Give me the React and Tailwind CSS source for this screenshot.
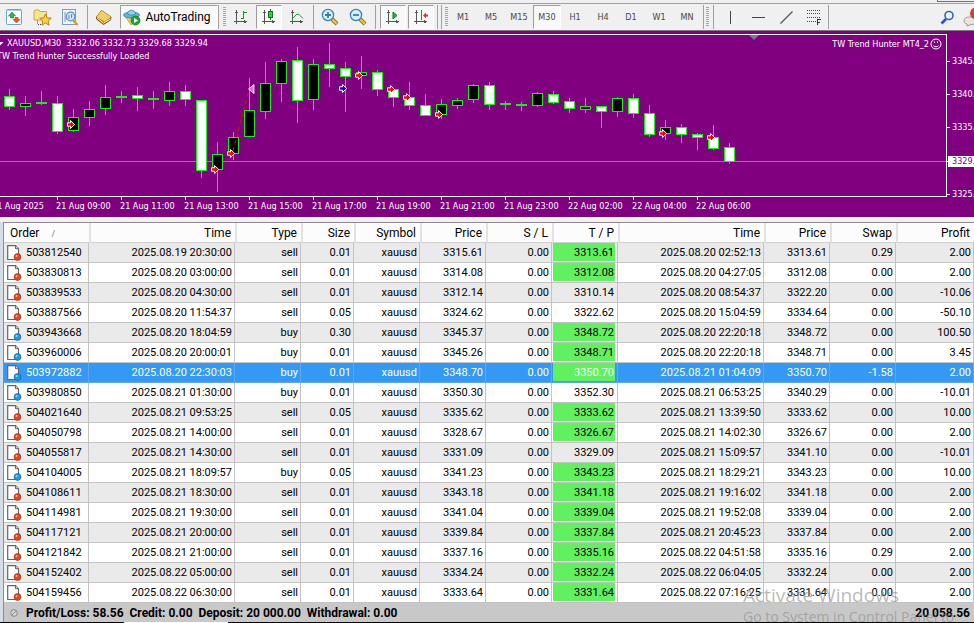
import React from "react";

/* ---------- data ---------- */

// centre x, high, body top, body bottom, low, kind (u = black body, d = white body, f = flat)
const CANDLES = [
  [9, 89, 96, 107, 110, "d"], [25, 96, 103, 107, 116, "u"], [41, 91, 102, 104, 105, "f"],
  [57, 96, 103, 132, 134, "d"], [73, 109, 117, 131, 132, "u"], [89, 101, 109, 118, 126, "u"],
  [105, 85, 97, 109, 115, "u"], [121, 91, 96, 98, 103, "f"], [137, 87, 95, 99, 111, "d"],
  [153, 91, 98, 100, 109, "f"], [169, 82, 91, 101, 106, "u"], [185, 85, 91, 100, 106, "d"],
  [201, 100, 100, 171, 178, "d"], [217, 142, 154, 170, 192, "u"], [233, 132, 137, 154, 160, "u"],
  [249, 78, 110, 137, 137, "u"], [265, 62, 83, 112, 119, "u"], [281, 59, 61, 84, 102, "u"],
  [297, 47, 60, 101, 123, "d"], [313, 59, 64, 100, 110, "u"], [329, 43, 64, 69, 87, "d"],
  [345, 62, 68, 77, 112, "d"], [361, 56, 72, 76, 89, "u"], [377, 70, 72, 90, 96, "d"],
  [393, 89, 89, 98, 107, "d"], [409, 82, 97, 106, 110, "d"], [425, 94, 105, 116, 116, "d"],
  [441, 99, 104, 115, 119, "u"], [457, 98, 100, 106, 109, "u"], [473, 84, 85, 100, 103, "u"],
  [489, 82, 85, 105, 110, "d"], [505, 101, 103, 105, 110, "f"], [521, 102, 104, 106, 111, "f"],
  [537, 92, 93, 106, 107, "u"], [553, 91, 94, 103, 104, "d"], [569, 98, 101, 109, 113, "d"],
  [585, 98, 106, 110, 113, "u"], [601, 106, 106, 112, 128, "d"], [617, 97, 98, 112, 117, "u"],
  [633, 94, 98, 114, 118, "d"], [649, 105, 113, 135, 137, "d"], [665, 120, 127, 134, 140, "u"],
  [681, 124, 127, 135, 143, "d"], [697, 133, 134, 138, 150, "d"], [713, 125, 137, 149, 150, "d"],
  [729, 143, 147, 162, 164, "d"],
];

const ARROWS = [
  [71, 124.5, "#ff0000"], [215, 169.5, "#ff0000"], [231, 153.5, "#ff0000"],
  [343, 88.5, "#0000ff"], [359, 75.5, "#ff0000"], [391, 89.5, "#ff0000"],
  [407, 97.5, "#ff0000"], [439, 114.5, "#ff0000"], [663, 133.5, "#ff0000"],
  [711, 137.5, "#ff0000"],
];

const TIMES = [
  "21 Aug 2025", "21 Aug 09:00", "21 Aug 11:00", "21 Aug 13:00", "21 Aug 15:00", "21 Aug 17:00",
  "21 Aug 19:00", "21 Aug 21:00", "21 Aug 23:00", "22 Aug 02:00", "22 Aug 04:00", "22 Aug 06:00",
];

const TIMEFRAMES = ["M1", "M5", "M15", "M30", "H1", "H4", "D1", "W1", "MN"];

const COLUMNS = [
  ["Order", "w-[85px]"], ["Time", "w-[146px]"], ["Type", "w-[66px]"], ["Size", "w-[53px]"],
  ["Symbol", "w-[66px]"], ["Price", "w-[66px]"], ["S / L", "w-[66px]"], ["T / P", "w-[66px]"],
  ["Time", "w-[146px]"], ["Price", "w-[66px]"], ["Swap", "w-[66px]"], ["Profit", "w-[78px]"],
];

// order, open time, type, size, price, T/P, T/P hit, close time, close price, swap, profit
const ORDERS = [
  ["503812540", "2025.08.19 20:30:00", "sell", "0.01", "3315.61", "3313.61", 1, "2025.08.20 02:52:13", "3313.61", "0.29", "2.00"],
  ["503830813", "2025.08.20 03:00:00", "sell", "0.01", "3314.08", "3312.08", 1, "2025.08.20 04:27:05", "3312.08", "0.00", "2.00"],
  ["503839533", "2025.08.20 04:30:00", "sell", "0.01", "3312.14", "3310.14", 0, "2025.08.20 08:54:37", "3322.20", "0.00", "-10.06"],
  ["503887566", "2025.08.20 11:54:37", "sell", "0.05", "3324.62", "3322.62", 0, "2025.08.20 15:04:59", "3334.64", "0.00", "-50.10"],
  ["503943668", "2025.08.20 18:04:59", "buy", "0.30", "3345.37", "3348.72", 1, "2025.08.20 22:20:18", "3348.72", "0.00", "100.50"],
  ["503960006", "2025.08.20 20:00:01", "buy", "0.01", "3345.26", "3348.71", 1, "2025.08.20 22:20:18", "3348.71", "0.00", "3.45"],
  ["503972882", "2025.08.20 22:30:03", "buy", "0.01", "3348.70", "3350.70", 1, "2025.08.21 01:04:09", "3350.70", "-1.58", "2.00"],
  ["503980850", "2025.08.21 01:30:00", "buy", "0.01", "3350.30", "3352.30", 0, "2025.08.21 06:53:25", "3340.29", "0.00", "-10.01"],
  ["504021640", "2025.08.21 09:53:25", "sell", "0.05", "3335.62", "3333.62", 1, "2025.08.21 13:39:50", "3333.62", "0.00", "10.00"],
  ["504050798", "2025.08.21 14:00:00", "sell", "0.01", "3328.67", "3326.67", 1, "2025.08.21 14:02:30", "3326.67", "0.00", "2.00"],
  ["504055817", "2025.08.21 14:30:00", "sell", "0.01", "3331.09", "3329.09", 0, "2025.08.21 15:09:57", "3341.10", "0.00", "-10.01"],
  ["504104005", "2025.08.21 18:09:57", "buy", "0.05", "3341.23", "3343.23", 1, "2025.08.21 18:29:21", "3343.23", "0.00", "10.00"],
  ["504108611", "2025.08.21 18:30:00", "sell", "0.01", "3343.18", "3341.18", 1, "2025.08.21 19:16:02", "3341.18", "0.00", "2.00"],
  ["504114981", "2025.08.21 19:30:00", "sell", "0.01", "3341.04", "3339.04", 1, "2025.08.21 19:52:08", "3339.04", "0.00", "2.00"],
  ["504117121", "2025.08.21 20:00:00", "sell", "0.01", "3339.84", "3337.84", 1, "2025.08.21 20:45:23", "3337.84", "0.00", "2.00"],
  ["504121842", "2025.08.21 21:00:00", "sell", "0.01", "3337.16", "3335.16", 1, "2025.08.22 04:51:58", "3335.16", "0.29", "2.00"],
  ["504152402", "2025.08.22 05:00:00", "sell", "0.01", "3334.24", "3332.24", 1, "2025.08.22 06:04:05", "3332.24", "0.00", "2.00"],
  ["504159456", "2025.08.22 06:30:00", "sell", "0.01", "3333.64", "3331.64", 1, "2025.08.22 07:16:25", "3331.64", "0.00", "2.00"],
];

const SELECTED = "503972882";

/* ---------- toolbar ---------- */

function ToolButton({ label, className = "w-7", pressed = false, children }) {
  return (
    <button
      type="button"
      aria-label={label}
      aria-pressed={pressed}
      className={`flex h-6 shrink-0 items-center justify-center ${className} ${
        pressed ? "border border-t-[#9c9c9c] border-l-[#9c9c9c] border-r-white border-b-white bg-[#f8f8f8]" : ""
      }`}
    >
      {children}
    </button>
  );
}

function Separator({ className = "" }) {
  return <span className={`h-6 w-px shrink-0 bg-[#a0a0a0] ${className}`} />;
}

function Handle({ className = "" }) {
  return (
    <span
      className={`h-5 w-[3px] shrink-0 bg-[repeating-linear-gradient(to_bottom,#a6a6a6_0_1px,#f0f0f0_1px_2px)] ${className}`}
    />
  );
}

const Axes = ({ children }) => (
  <svg width="16" height="16" viewBox="0 0 16 16" fill="none" shapeRendering="crispEdges">
    <path d="M3.5 1v14M1 12.5h13M2 3.5h3M11.5 11v3M12.5 11.5v2" stroke="#555" />
    {children}
  </svg>
);

function Magnifier({ plus }) {
  return (
    <svg width="18" height="18" viewBox="0 0 18 18" fill="none">
      <path d="M11 11l5 5" stroke="#8a6a10" strokeWidth="4" />
      <path d="M11 11l4.6 4.6" stroke="#f3c944" strokeWidth="2.4" />
      <circle cx="7" cy="7" r="5.6" fill="#d3efff" stroke="#3d7fb5" strokeWidth="1.3" />
      <path d={plus ? "M4 7h6M7 4v6" : "M4 7h6"} stroke="#3a7ca6" strokeWidth="1.8" />
    </svg>
  );
}

function Toolbar() {
  return (
    <div role="toolbar" className="flex h-[27px] items-center overflow-hidden border-b border-[#7a7a7a] bg-[#f0f0f0]">
      <ToolButton label="Market watch">
        <svg width="16" height="16" viewBox="0 0 16 16">
          <rect x=".5" y=".5" width="15" height="15" rx="1" fill="#fff" stroke="#6ea2d0" />
          <path d="M1 1h14v1H1z" fill="#a9cdec" />
          <path d="M6 3l3.500 4h-2v2h-3V7h-2z" fill="#38b34a" stroke="#167a2a" strokeWidth=".6" />
          <path d="M10.500 14L7 10.500h2v-2h3v2h2z" fill="#ee5a30" stroke="#b43512" strokeWidth=".6" />
        </svg>
      </ToolButton>
      <ToolButton label="Navigator">
        <svg width="19" height="17" viewBox="0 0 19 17">
          <path d="M1 2.500l1-1.500h4l1 1.500h6.500V11H1z" fill="#fbe48e" stroke="#c99b34" strokeWidth=".9" />
          <path d="M4.500 11.500v4M5 15.500h4" stroke="#444" strokeDasharray="1 1" />
          <path d="M12.500 5l1.700 3.800 4.100.4-3.100 2.800.9 4.200-3.600-2.200-3.600 2.200.9-4.200-3.100-2.800 4.100-.4z" fill="#f9cf45" stroke="#a87a12" strokeWidth=".9" />
        </svg>
      </ToolButton>
      <ToolButton label="Strategy tester">
        <svg width="18" height="17" viewBox="0 0 18 17" fill="none">
          <rect x="1.500" y=".5" width="13" height="15" fill="#eef4fa" stroke="#7f9dbb" />
          <path d="M4 3v10M6 5v6M12 3v4" stroke="#8a9bb0" />
          <path d="M12 11l4.500 5" stroke="#caa030" strokeWidth="2.400" />
          <circle cx="9.500" cy="7.500" r="4.300" fill="#c4e4fa" fillOpacity=".8" stroke="#5c92c4" strokeWidth="1.200" />
          <path d="M8 6v4M10.500 5v4" stroke="#6a8cae" />
        </svg>
      </ToolButton>
      <Separator className="ml-[3px]" />
      <ToolButton label="Data window" className="w-8">
        <svg width="18" height="17" viewBox="0 0 18 17">
          <path d="M6.500 1.500L16 8l-.5 3-7 4.500L1.500 10V8z" fill="#b37d18" stroke="#7b540c" />
          <path d="M6.500 1.500L16 8l-6.500 4.500L1.500 8z" fill="#f3cf62" />
          <path d="M2 9l6.500 5 7-4" stroke="#fbeab0" fill="none" />
        </svg>
      </ToolButton>
      <ToolButton label="AutoTrading" className="w-[98px] gap-1 pr-1" pressed>
        <svg width="18" height="17" viewBox="0 0 18 17" className="shrink-0">
          <path d="M2 7l6 9 8-7z" fill="#f4cf56" stroke="#b8902a" strokeWidth=".7" />
          <ellipse cx="8.500" cy="6" rx="8" ry="3" fill="#63b4e0" stroke="#2c7fb0" strokeWidth=".8" />
          <path d="M4.500 5C5 0 12 0 12.500 5c-2 1.500-6 1.500-8 0z" fill="#8fd0f0" stroke="#2c7fb0" strokeWidth=".8" />
          <circle cx="12.500" cy="11.500" r="4.500" fill="#1fa62c" stroke="#0b7a18" strokeWidth=".7" />
          <path d="M11 9l4 2.500-4 2.500z" fill="#fff" />
        </svg>
        <span className="text-[12px] leading-4 text-black">AutoTrading</span>
      </ToolButton>
      <Separator />
      <Handle className="ml-1" />
      <ToolButton label="Bar chart" className="ml-0.5 w-[26px]">
        <Axes><path d="M10.500 2v8M10.500 3.500h3M8 9.500h3" stroke="#129a1c" strokeWidth="1" /></Axes>
      </ToolButton>
      <ToolButton label="Candlesticks" className="ml-0.5 w-[26px]" pressed>
        <Axes>
          <path d="M9.500 0v11" stroke="#0a7a12" />
          <rect x="7.500" y="2.500" width="4" height="6" fill="#2fd03a" stroke="#0a7a12" />
        </Axes>
      </ToolButton>
      <ToolButton label="Line chart" className="ml-0.5 w-[26px]">
        <Axes><path d="M3 10l5-5 2 .5 4 4" stroke="#1c9a26" shapeRendering="auto" /></Axes>
      </ToolButton>
      <Separator className="ml-[3px]" />
      <ToolButton label="Zoom in" className="ml-0.5 w-7"><Magnifier plus /></ToolButton>
      <ToolButton label="Zoom out"><Magnifier /></ToolButton>
      <Separator className="ml-[3px]" />
      <ToolButton label="Auto scroll" className="ml-1 w-[26px]" pressed>
        <Axes><path d="M8 3l4 3.500L8 10z" fill="#2cb838" stroke="#0b7a18" shapeRendering="auto" /></Axes>
      </ToolButton>
      <ToolButton label="Chart shift" className="ml-0.5 w-[26px]" pressed>
        <Axes>
          <path d="M8.500 1v10" stroke="#2b6fae" />
          <path d="M10 6.500l3-3v2h2v2h-2v2z" fill="#c8401c" shapeRendering="auto" />
        </Axes>
      </ToolButton>
      <Separator className="ml-[3px]" />
      <Separator className="ml-[3px]" />
      <Handle className="ml-[3px] mr-px" />
      {TIMEFRAMES.map((t) => (
        <ToolButton key={t} label={t} pressed={t === "M30"}>
          <span className="font-['DejaVu_Sans_Condensed','DejaVu_Sans',sans-serif] text-[9px] leading-3 text-[#484848]">{t}</span>
        </ToolButton>
      ))}
      <Separator className="ml-0.5" />
      <Handle className="ml-0.5" />
      <Separator className="ml-1 mr-0.5" />
      <ToolButton label="Vertical line">
        <svg width="13" height="13"><path d="M6.500 0v13" stroke="#444" /></svg>
      </ToolButton>
      <ToolButton label="Horizontal line">
        <svg width="13" height="13"><path d="M0 6.500h13" stroke="#444" /></svg>
      </ToolButton>
      <ToolButton label="Trendline">
        <svg width="13" height="13"><path d="M.5 12.500l12-12" stroke="#555" strokeWidth="1.300" /></svg>
      </ToolButton>
      <ToolButton label="Fibonacci retracement">
        <svg width="16" height="18" shapeRendering="crispEdges">
          <path d="M1 2.500h14M1 5.500h14M1 9.500h14M1 13.500h9" stroke="#444" strokeDasharray="1 1" />
          <path d="M11.500 17v-5.500H15M11 14.500h3" stroke="#333" fill="none" />
        </svg>
      </ToolButton>
      <Separator />
      <ToolButton label="Search" className="ml-auto w-7">
        <svg width="15" height="15" viewBox="0 0 15 15" fill="none">
          <path d="M6 9l-4.500 4.500" stroke="#2a55c4" strokeWidth="2.600" />
          <circle cx="9" cy="5.500" r="4" fill="#eef5ff" stroke="#2f63d0" strokeWidth="1.600" />
        </svg>
      </ToolButton>
      <button type="button" aria-label="Messages" className="h-6 w-[13px] shrink-0 overflow-hidden pl-0.5">
        <svg width="18" height="20" viewBox="0 0 18 20" className="max-w-none">
          <path d="M1 14c0-3 3-4 6-4s7 1 7 4-4 3.500-6 3.500L4 19v-2c-2-.5-3-1.500-3-3z" fill="#e6e6e6" stroke="#9a9a9a" />
          <circle cx="13" cy="6.500" r="6" fill="#e63a22" />
        </svg>
      </button>
    </div>
  );
}

/* ---------- chart ---------- */

function Candle({ c: [x, hi, top, bot, lo, kind] }) {
  return (
    <g>
      <rect x={x} y={hi} width="1" height={lo - hi} fill="#00ff00" />
      <rect x={x - 5} y={top} width="11" height={bot - top} fill="#00ff00" />
      {kind !== "f" && (
        <rect x={x - 4} y={top + 1} width="9" height={bot - top - 2} fill={kind === "u" ? "#000" : "#fff"} />
      )}
    </g>
  );
}

function PriceAxis() {
  return (
    <div className="flex h-[163px] w-[27px] shrink-0 flex-col overflow-hidden pt-[22px]">
      {["3345.80", "3340.80", "3335.80", "3329.94", "3325.80"].map((p) => {
        const current = p === "3329.94";
        return (
          <div key={p} className={`flex shrink-0 items-center ${current ? "h-[34px]" : "h-[33px]"}`}>
            <div className="-mt-[22px] flex items-center">
              <span className={`h-px bg-white ${current ? "w-px" : "w-[3px]"}`} />
              <span className={current ? "bg-white py-px pr-2 pl-1 text-[#800080]" : "pl-0.5"}>{p}</span>
            </div>
          </div>
        );
      })}
    </div>
  );
}

function Chart() {
  return (
    <section className="overflow-hidden bg-[#800080] pt-[3px] font-['DejaVu_Sans_Condensed','DejaVu_Sans',sans-serif] text-[9px] leading-[9px] text-white">
      <div className="flex">
        <div className="relative h-[163px] min-w-0 flex-1 border-y border-r border-white">
          <svg width="100%" height="161" className="block" role="img" aria-label="XAUUSD M30 candlestick chart">
            <g transform="translate(0,-35)">
              <g shapeRendering="crispEdges">
                <rect x="0" y="161" width="100%" height="1" fill="#80808f" />
                {CANDLES.map((c) => <Candle key={c[0]} c={c} />)}
              </g>
              <path d="M233 151L249 90" stroke="#ff0000" strokeDasharray="4 3" />
              {ARROWS.map(([x, y, fill]) => (
                <path
                  key={x}
                  transform={`translate(${x},${y})`}
                  d="M-3.500-1.700h3v-2.300L3.700 0l-4.200 4V1.700h-3z"
                  fill={fill}
                  stroke="#fff"
                />
              ))}
              <path d="M254 84.500v9l-5.500-4.500z" fill="#da70d6" stroke="#fff" strokeWidth=".8" />
              <path d="M749 35h10l-5 5z" fill="#708090" />
            </g>
          </svg>
          <div className="absolute top-1 left-0 flex items-center gap-[3px]">
            <svg width="4" height="9"><path d="M0 3h3.500L0 6.500z" fill="#fff" /></svg>
            <span className="whitespace-pre">{"XAUUSD,M30  3332.06 3332.73 3329.68 3329.94"}</span>
          </div>
          <p className="absolute top-[17px] -left-[3px] whitespace-nowrap">TW Trend Hunter Successfully Loaded</p>
          <div className="absolute top-[3px] right-1 flex items-center gap-px">
            <span>TW Trend Hunter MT4_2</span>
            <svg width="12" height="12" viewBox="0 0 12 12" fill="none" stroke="#fff">
              <circle cx="6" cy="6" r="5" />
              <path d="M3.500 7.500c1 1.700 4 1.700 5 0M4.500 3.500v1.500M7.500 3.500v1.500" />
            </svg>
          </div>
        </div>
        <PriceAxis />
      </div>
      <div className="-ml-2 flex h-5 overflow-hidden">
        {TIMES.map((t) => (
          <span key={t} className="block w-16 shrink-0 whitespace-nowrap before:mb-[2px] before:ml-[9px] before:block before:h-[3px] before:w-px before:bg-white">
            <span className="ml-2">{t}</span>
          </span>
        )).map((el, i) => (i === 0 ? <span key="first" className="block w-14 shrink-0 pt-[5px] whitespace-nowrap">{TIMES[0]}</span> : el))}
      </div>
    </section>
  );
}

/* ---------- history table ---------- */

function OrderIcon({ buy }) {
  return (
    <svg width="15" height="16" viewBox="0 0 15 16" className="shrink-0">
      <path d="M.7.700h7.800l3 3v10.800H.7z" fill="#fff" stroke="#666" strokeWidth="1.200" />
      <path d="M8.500.700v3h3" fill="#ddd" stroke="#666" />
      <circle cx="10.500" cy="12" r="3.400" fill={buy ? "#1d9be8" : "#e8481c"} stroke={buy ? "#0e5f9c" : "#9c2a0a"} strokeWidth=".7" />
      <circle cx="9.500" cy="10.900" r="1" fill="#fff" fillOpacity=".6" />
    </svg>
  );
}

function Row({ order, shaded }) {
  const [id, opened, type, size, price, tp, hit, closed, closePrice, swap, profit] = order;
  const selected = id === SELECTED;
  const line = `border-r border-b text-right ${selected ? "border-[#5aa9f5]" : "border-[#c3c3c3]"}`;
  const cell = `${line} pt-px pr-0.5`;
  return (
    <tr
      aria-selected={selected}
      className={`h-5 ${selected ? "bg-[#3399f5] text-white" : shaded ? "bg-[#eaeaea]" : "bg-white"}`}
    >
      <td className={cell}>
        <span className="flex items-center gap-1 pl-[3px]"><OrderIcon buy={type === "buy"} />{id}</span>
      </td>
      <td className={cell}>{opened}</td>
      <td className={cell}>{type}</td>
      <td className={cell}>{size}</td>
      <td className={cell}>xauusd</td>
      <td className={cell}>{price}</td>
      <td className={cell}>0.00</td>
      <td className={`${line} pr-0.5 pb-px pl-px`}>
        <span className={`block h-[18px] pr-px leading-[20px] ${hit ? "bg-[#60f060]" : ""}`}>{tp}</span>
      </td>
      <td className={cell}>{closed}</td>
      <td className={cell}>{closePrice}</td>
      <td className={cell}>{swap}</td>
      <td className={cell}>{profit}</td>
    </tr>
  );
}

function History() {
  return (
    <section className="border-t border-l border-[#8c8c8c]">
      <table className="w-full table-fixed border-separate border-spacing-0 text-[11px] leading-[16px] text-black">
        <thead>
          <tr className="h-5 bg-[#fcfcfc] text-[12px]">
            {COLUMNS.map(([name, width], i) => (
              <th
                key={i}
                scope="col"
                className={`border-b border-[#d0d0d0] pt-px font-normal ${width} ${
                  i === 0 ? "pl-1.5 text-left" : "border-l-2 border-l-[#e2e2e2] pr-1 text-right"
                }`}
              >
                {name}
                {i === 0 && <span className="ml-3 text-[9px] text-[#777]">/</span>}
              </th>
            ))}
          </tr>
        </thead>
        <tbody>
          {ORDERS.map((o, i) => <Row key={o[0]} order={o} shaded={i % 2 === 0} />)}
        </tbody>
      </table>
      <div className="flex h-[19px] items-center bg-[#c8c8c8] pr-1 pl-1.5 text-[12px] leading-4 font-bold text-black">
        <svg width="8" height="8" viewBox="0 0 8 8" className="mr-2">
          <circle cx="4" cy="4" r="3.300" fill="#d8d8d8" stroke="#888" />
          <path d="M2 6l4-4" stroke="#888" />
        </svg>
        <span className="whitespace-pre">{"Profit/Loss: 58.56  Credit: 0.00  Deposit: 20 000.00  Withdrawal: 0.00"}</span>
        <span className="ml-auto">20 058.56</span>
      </div>
    </section>
  );
}

export default function App() {
  return (
    <div className="relative overflow-hidden bg-[#f0f0f0] font-[Roboto,'Open_Sans',sans-serif]">
      <div className="flex h-1 justify-end border-b border-[#a0a0a0]">
        <span className="h-0.5 w-[37px] border-b border-l border-[#707070]" />
      </div>
      <Toolbar />
      <Chart />
      <div className="h-[5px] border-t border-white" />
      <div className="bg-[#d5dde6] pl-[3px]">
        <History />
      </div>
      <div className="flex h-px bg-black"><span className="ml-[124px] w-[104px] bg-white" /></div>
      <div className="pointer-events-none absolute right-0 bottom-0 h-10 w-[231px] overflow-hidden whitespace-nowrap text-[#8a8a8a]/60 font-['Open_Sans',sans-serif]">
        <p className="text-[19px] leading-6">Activate Windows</p>
        <p className="text-[14px] leading-5">Go to System in Control Panel to</p>
      </div>
    </div>
  );
}
